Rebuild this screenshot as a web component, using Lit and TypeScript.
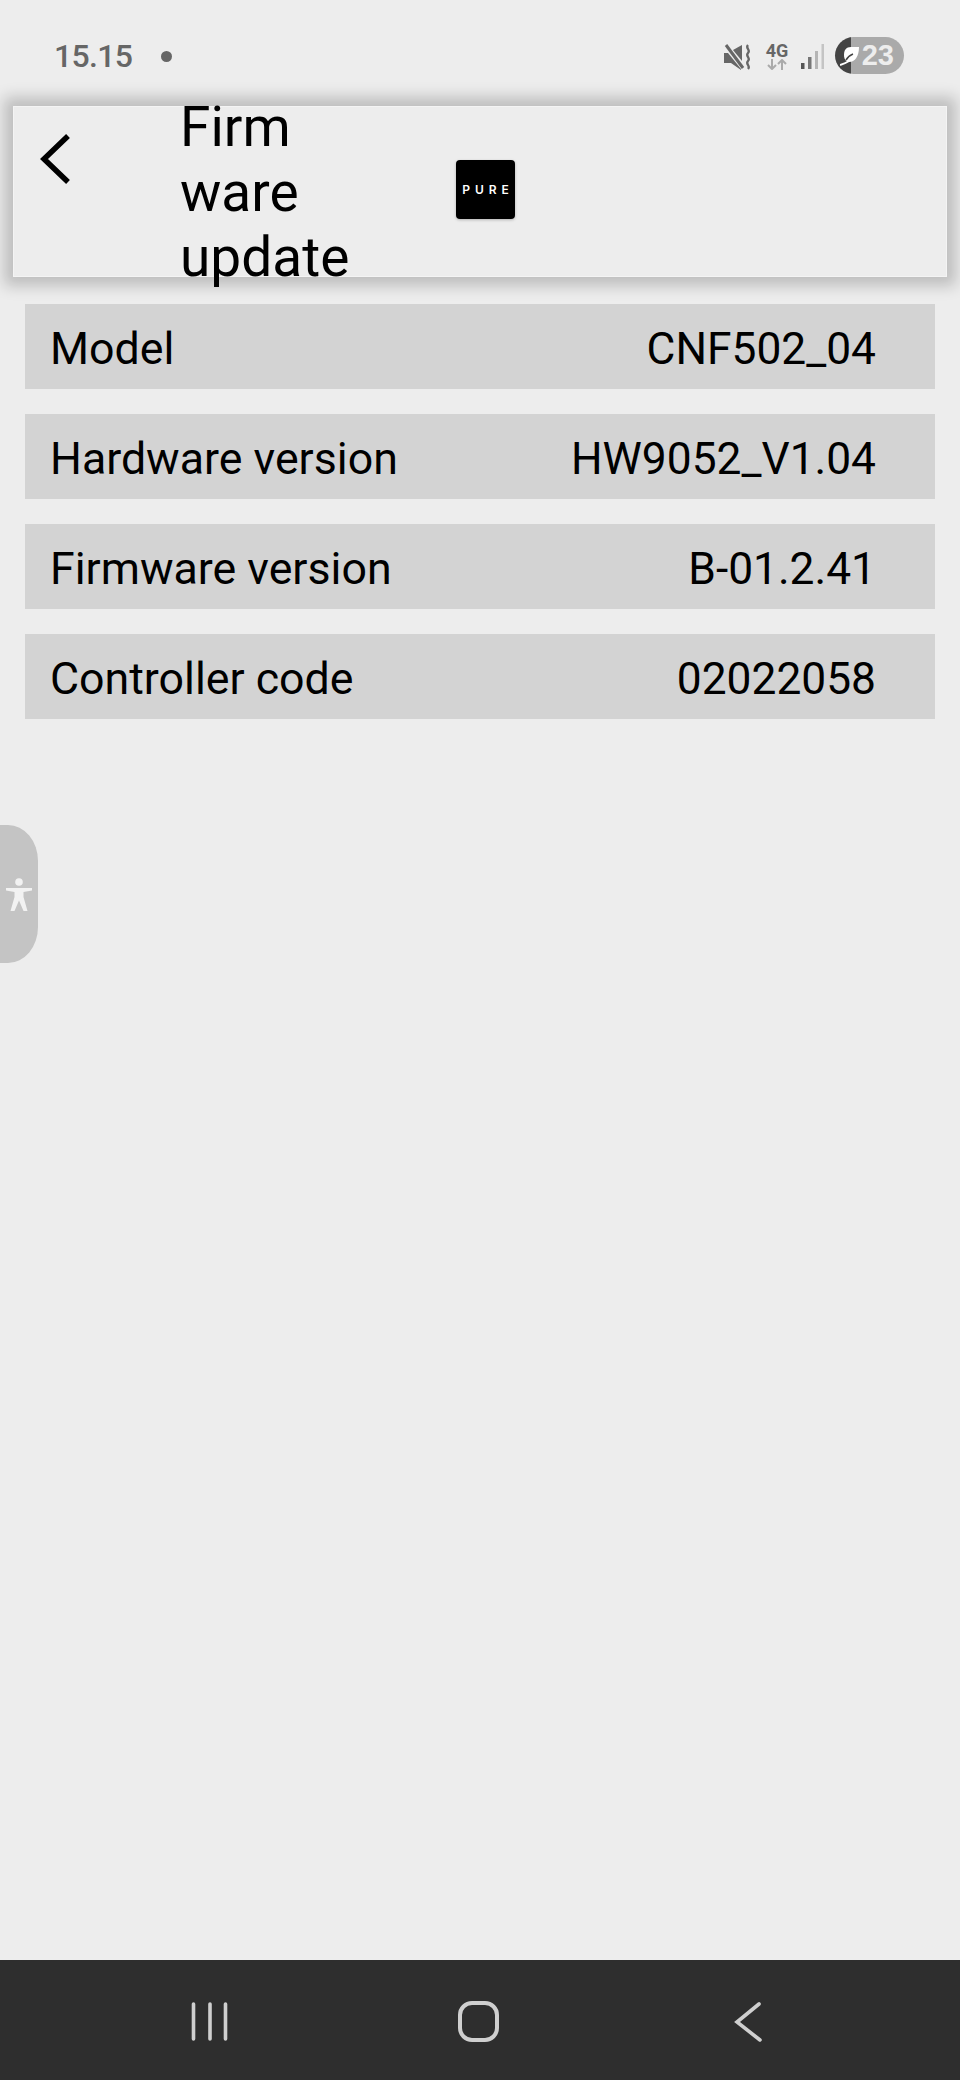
import { LitElement, html, css } from "lit";
import { customElement } from "lit/decorators.js";

const rows: [string, string][] = [
  ["Model", "CNF502_04"],
  ["Hardware version", "HW9052_V1.04"],
  ["Firmware version", "B-01.2.41"],
  ["Controller code", "02022058"],
];

@customElement("app-root")
export class AppRoot extends LitElement {
  static styles = css`
    :host {
      display: flex;
      flex-direction: column;
      position: relative;
      width: 960px;
      height: 2080px;
      background: #ededed;
      font-family: Roboto, "Liberation Sans", sans-serif;
      color: #000;
      overflow: hidden;
    }
    .status {
      height: 106px;
      flex: none;
      box-sizing: border-box;
      padding: 38px 56px 0 54px;
      display: flex;
      align-items: flex-start;
      color: #666;
    }
    .time {
      font-size: 32px;
      font-weight: 500;
      line-height: 37px;
      letter-spacing: -0.7px;
    }
    .dot {
      width: 11px;
      height: 11px;
      border-radius: 50%;
      background: #666;
      margin: 13px 0 0 29px;
    }
    .status-right {
      margin-left: auto;
      display: flex;
      align-items: flex-start;
      margin-top: -1px;
    }
    .mute { margin-top: 7px; }
    .net {
      width: 24px;
      margin-left: 14px;
      display: flex;
      flex-direction: column;
      align-items: center;
      margin-top: 5px;
    }
    .net-label {
      font-size: 18px;
      line-height: 17px;
      font-weight: 700;
      color: #666;
    }
    .signal { margin: 7px 0 0 12px; }
    .pill {
      position: relative;
      width: 69px;
      height: 37px;
      margin-left: 11px;
      border-radius: 19px;
      background: linear-gradient(to right, #444 0, #444 23%, #aaa 23%);
      overflow: hidden;
    }
    .leaf { position: absolute; left: 5px; top: 9px; }
    .pill-num {
      position: absolute;
      right: 10px;
      top: 0;
      font-size: 29px;
      line-height: 37px;
      font-weight: 700;
      color: #ededed;
      font-family: "Liberation Sans", sans-serif;
    }
    .header {
      flex: none;
      height: 171px;
      margin: 0 13px;
      background: #ededed;
      box-shadow: 0 0 14px 9px rgba(0, 0, 0, 0.2), inset 0 0 0 1px rgba(255, 255, 255, 0.4);
      display: flex;
      align-items: center;
      position: relative;
    }
    .back {
      flex: none;
      margin: -66px 0 0 26px;
      display: block;
    }
    .title {
      flex: none;
      width: 276px;
      margin-left: 107px;
      font-size: 55px;
      line-height: 65px;
      margin-top: 2px;
    }
    .logo {
      flex: none;
      width: 59px;
      height: 59px;
      margin-top: -4px;
      box-sizing: border-box;
      border-radius: 4px;
      background: #000;
      color: #fff;
      font-family: Inter, Roboto, sans-serif;
      font-size: 12px;
      font-weight: 600;
      letter-spacing: 5px;
      padding-left: 5px;
      display: flex;
      align-items: center;
      justify-content: center;
      box-shadow: 0 1px 3px rgba(0, 0, 0, 0.25);
    }
    .list {
      flex: 1;
      padding: 27px 25px 0;
      display: flex;
      flex-direction: column;
      gap: 25px;
    }
    .row {
      height: 85px;
      box-sizing: border-box;
      background: #d3d3d3;
      display: flex;
      align-items: center;
      justify-content: space-between;
      padding: 5px 59px 0 25px;
      font-size: 44.7px;
    }
    .value { font-size: 44.3px; }
    .tab {
      position: absolute;
      left: 0;
      top: 825px;
      width: 38px;
      height: 138px;
      background: #c4c4c4;
      border-radius: 0 30px 30px 0 / 0 36px 36px 0;
      display: flex;
      align-items: center;
      justify-content: center;
    }
    .tab svg { margin-top: 2px; }
    .nav {
      flex: none;
      height: 120px;
      background: #2e2e2e;
      position: relative;
    }
    .nav svg { display: block; }
  `;

  render() {
    return html`
      <div class="status">
        <div class="time">15.15</div>
        <div class="dot"></div>
        <div class="status-right">
          <svg class="mute" width="27" height="27" viewBox="0 0 27 27">
            <path d="M9 6L18 1v16z" fill="#666" />
            <path d="M0 9h4l13 16v1L7 19H0z" fill="#666" />
            <path d="M2 1l17 23" stroke="#666" stroke-width="3" />
            <path d="M24 1c-3 3 3 5 0 8s3 5 0 8 3 5 0 8" stroke="#666" stroke-width="2.4" fill="none" />
          </svg>
          <div class="net">
            <div class="net-label">4G</div>
            <svg width="22" height="11" viewBox="0 0 22 11">
              <path d="M6 0v10M2 6l4 4 4-4" stroke="#aaa" stroke-width="2" fill="none" />
              <path d="M16 11V1M12 5l4-4 4 4" stroke="#aaa" stroke-width="2" fill="none" />
            </svg>
          </div>
          <svg class="signal" width="23" height="25" viewBox="0 0 23 25">
            <rect x="0" y="19" width="3.5" height="6" fill="#555" />
            <rect x="7" y="13" width="3.5" height="12" fill="#777" />
            <rect x="14" y="7" width="3" height="18" fill="#b5b5b5" />
            <rect x="20.5" y="0" width="2.5" height="25" fill="#c4c4c4" />
          </svg>
          <div class="pill">
            <svg class="leaf" width="22" height="20" viewBox="0 0 22 20">
              <path d="M19 1h-8C6 1 4 4 4 9c0 4 2 7 5 7 6 0 10-6 10-15z" fill="#fff" />
              <path d="M0 19c3-1 6-2 9-4" stroke="#fff" stroke-width="2" fill="none" />
              <path d="M6 14c2-3 4-5 7-6" stroke="#444" stroke-width="1.6" fill="none" />
            </svg>
            <span class="pill-num">23</span>
          </div>
        </div>
      </div>

      <div class="header">
        <svg class="back" width="34" height="54" viewBox="0 0 34 54">
          <path d="M29 4 L5 27 L29 50" stroke="#000" stroke-width="5.5" fill="none" />
        </svg>
        <div class="title">Firm<br />ware<br />update</div>
        <div class="logo">PURE</div>
      </div>

      <div class="list">
        ${rows.map(
          ([k, v]) => html`<div class="row"><span>${k}</span><span class="value">${v}</span></div>`
        )}
      </div>

      <div class="tab">
        <svg width="28" height="34" viewBox="0 0 28 34">
          <circle cx="14" cy="4" r="3.8" fill="#f2f2f2" />
          <path d="M1 10h26v2.6l-8.5 1.4v5l4 14h-4L14 22.5 9.500 33h-4l4-14v-5L1 12.600z" fill="#f2f2f2" />
        </svg>
      </div>

      <div class="nav">
        <svg width="960" height="120" viewBox="0 0 960 120">
          <g stroke="#cfcfcf" stroke-width="3.6" stroke-linecap="round" fill="none">
            <path d="M193.500 44v35M210 44v35M225.500 44v35" />
            <rect x="460" y="43" width="37" height="37" rx="12" stroke-width="4" />
            <path d="M759 44 L737 62 L760 80" />
          </g>
        </svg>
      </div>
    `;
  }
}
